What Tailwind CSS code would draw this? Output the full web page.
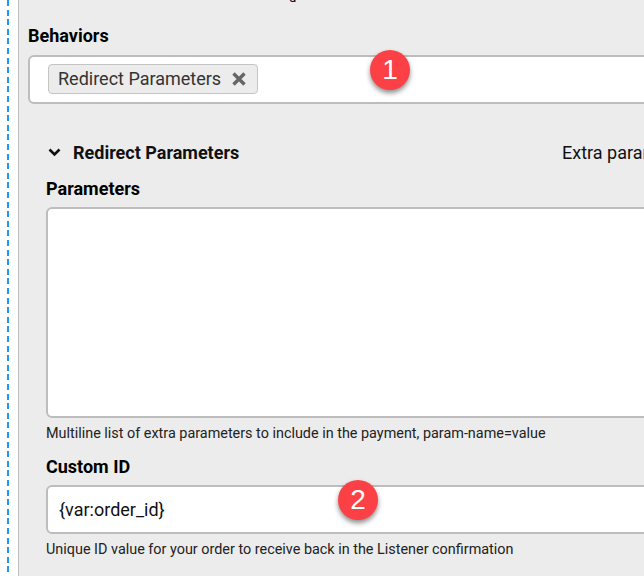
<!DOCTYPE html>
<html>
<head>
<meta charset="utf-8">
<script src="https://cdn.jsdelivr.net/npm/@tailwindcss/browser@4"></script>
</head>
<body class="bg-white">
<div class="w-[644px] h-[576px] overflow-hidden flex font-['Roboto',sans-serif] text-[#111]">
  <div class="w-[18px] shrink-0 pl-[7px]">
    <div class="w-[2px] h-full bg-[repeating-linear-gradient(to_bottom,#2196f3_0,#2196f3_6px,transparent_6px,transparent_9.6px)]"></div>
  </div>
  <div class="relative w-[700px] shrink-0 bg-[#ececec] border-l border-[#bdbdbd] pl-[9px]">
    <div class="h-[2px] overflow-hidden pl-[261px] text-[13px] leading-none"><div class="-mt-[9px]">g</div></div>
    <div class="mt-[24px] text-[18px] leading-5 font-bold text-black">Behaviors</div>
    <div class="mt-[9px] h-[49px] w-[680px] bg-white border-2 border-[#bdbdbd] rounded-md pl-[18px] pt-[7px]">
      <div class="inline-flex items-center h-[30px] w-[210px] bg-[#ececec] border border-[#c4c4c4] rounded pl-[9px] text-[18px] leading-[26px] pb-[1px] text-[#333]">
        <span>Redirect Parameters</span>
        <svg class="ml-[11px]" width="14" height="14" viewBox="0 0 14 14"><path d="M1.5 1.5 12.5 12.5M12.5 1.5 1.5 12.5" stroke="#666" stroke-width="3.4" fill="none"/></svg>
      </div>
    </div>
    <div class="mt-[37px] flex items-center h-[22px] pl-[20px]">
      <svg width="13" height="9" viewBox="0 0 13 9"><path d="M1.5 1.5 6.5 6.5 11.5 1.5" stroke="#111" stroke-width="2.6" fill="none"/></svg>
      <span class="ml-[12px] w-[489px] shrink-0 text-[18px] font-bold whitespace-nowrap">Redirect Parameters</span>
      <span class="text-[18px] shrink-0 whitespace-nowrap">Extra parameters</span>
    </div>
    <div class="mt-[16px] ml-[18px] text-[18px] leading-5 font-bold text-black">Parameters</div>
    <div class="mt-[8px] ml-[18px] h-[211px] w-[660px] bg-white border-2 border-[#bdbdbd] rounded-md"></div>
    <div class="mt-[8px] ml-[18px] text-[14.4px] leading-4 text-[#222]">Multiline list of extra parameters to include in the payment, param-name=value</div>
    <div class="mt-[15px] ml-[18px] text-[18px] leading-5 font-bold text-black">Custom ID</div>
    <div class="mt-[8px] ml-[18px] h-[49px] w-[660px] bg-white border-2 border-[#bdbdbd] rounded-md flex items-center pl-[11px] text-[18px]">{var:order_id}</div>
    <div class="mt-[8px] ml-[18px] text-[14.4px] leading-4 text-[#222]">Unique ID value for your order to receive back in the Listener confirmation</div>
    <div class="absolute left-[351px] top-[50px] w-10 h-10 rounded-full bg-[#fb4146] shadow-[0_3px_5px_rgba(0,0,0,0.45)] flex items-center justify-center text-white text-[28px] font-['Liberation_Sans',sans-serif]">1</div>
    <div class="absolute left-[319px] top-[480px] w-10 h-10 rounded-full bg-[#fb4146] shadow-[0_3px_5px_rgba(0,0,0,0.45)] flex items-center justify-center text-white text-[28px] font-['Liberation_Sans',sans-serif]">2</div>
  </div>
</div>
</body>
</html>
